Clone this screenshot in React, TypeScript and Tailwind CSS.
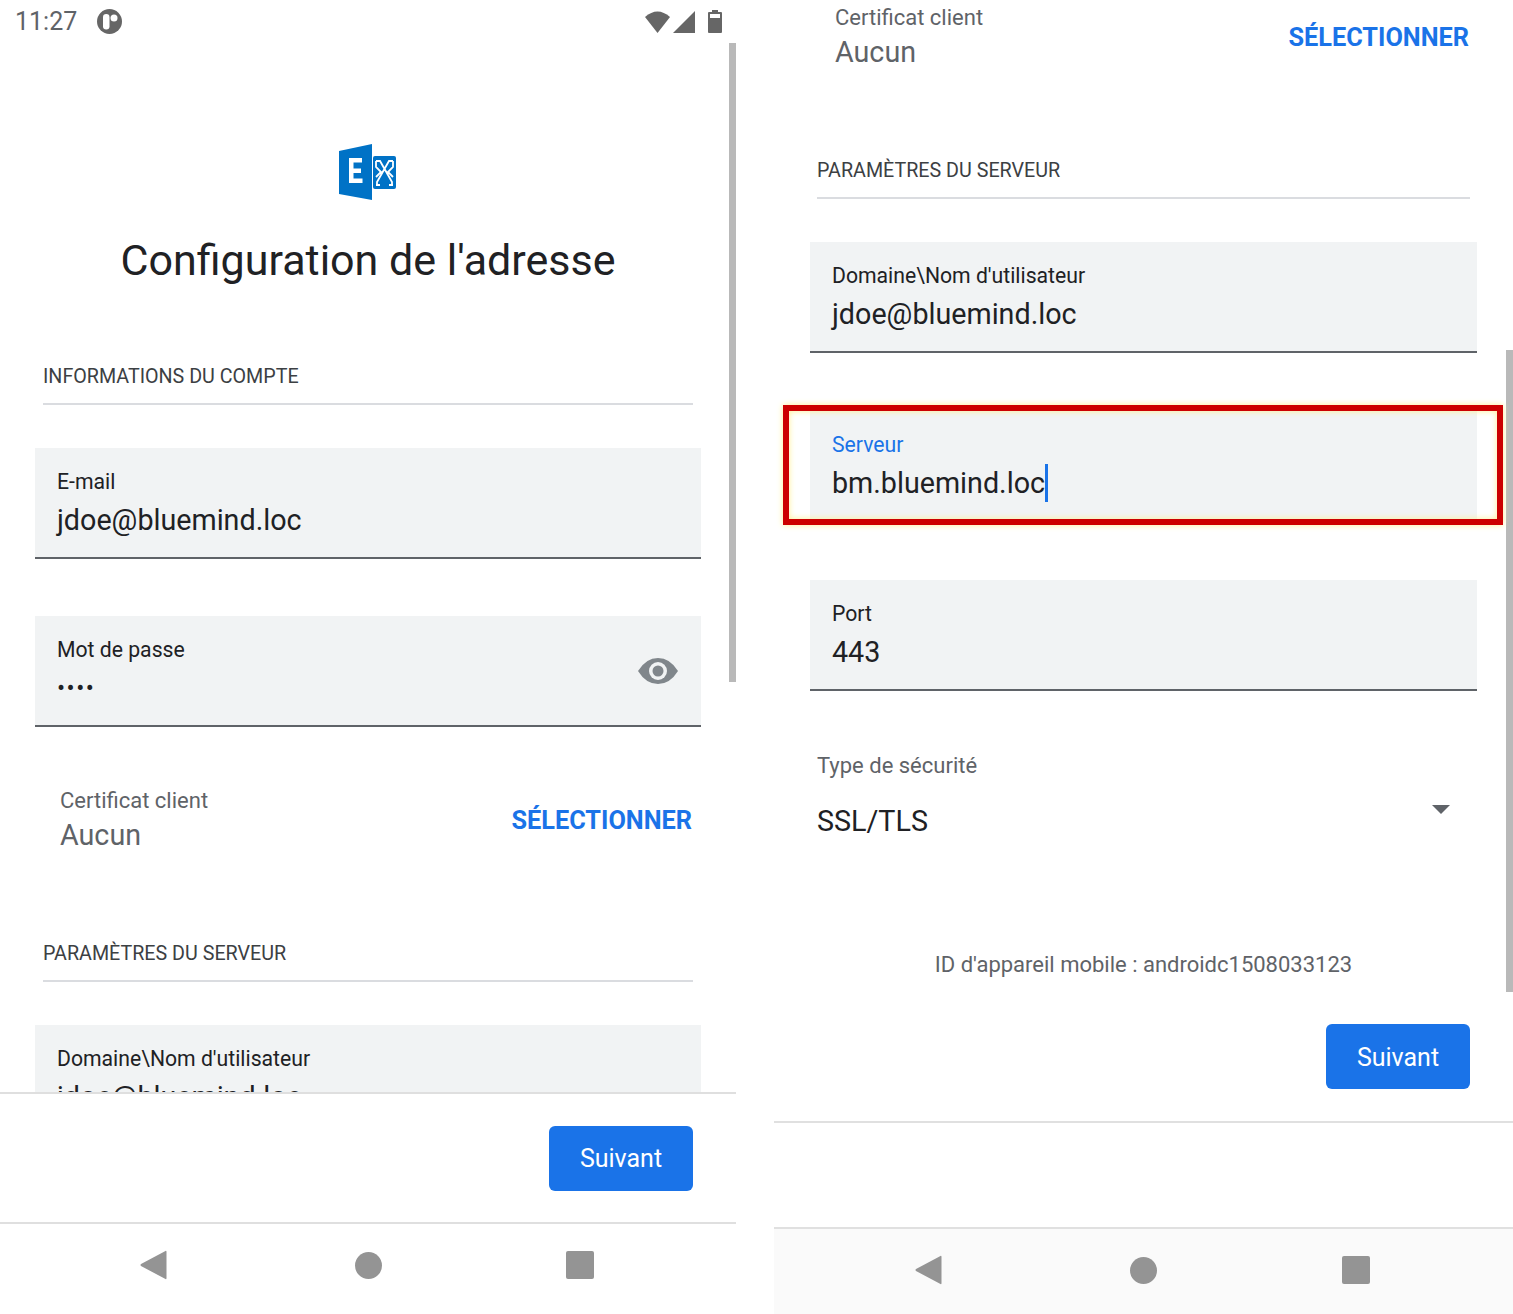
import React from 'react';

const font = { fontFamily: 'Roboto, sans-serif' };

function SectionTitle({ children, className }: { children: React.ReactNode; className?: string }) {
    return (
        <div className={`mx-[43px] h-[41px] shrink-0 border-b-2 border-[#dadce0] pt-[1px] text-[19.7px] leading-[24px] text-[#3c4043] ${className ?? ''}`}>
            {children}
        </div>
    );
}

function Field({ label, value, focused, trailing, className }: { label: string; value: React.ReactNode; focused?: boolean; trailing?: React.ReactNode; className?: string }) {
    return (
        <div className={`relative h-[111px] shrink-0 border-b-2 border-[#5f6368] bg-[#f1f3f4] px-[22px] pt-[21px] ${className ?? ''}`}>
            <div className={`text-[21.2px] leading-[26px] ${focused ? 'text-[#1a73e8]' : 'text-[#202124]'}`}>{label}</div>
            <div className="mt-[6px] flex h-[38px] items-center text-[28.7px] leading-[38px] text-[#202124]">{value}</div>
            {trailing}
        </div>
    );
}

function CertRow({ className }: { className?: string }) {
    return (
        <div className={`flex shrink-0 items-center justify-between ${className ?? ''}`}>
            <div className="pt-[1px]">
                <div className="text-[22px] leading-[26px] text-[#5f6368]">Certificat client</div>
                <div className="mt-[3px] text-[28.7px] leading-[36px] text-[#5f6368]">Aucun</div>
            </div>
            <div className="pt-[2px] text-[25.3px] leading-[30px] font-bold text-[#1a73e8]">SÉLECTIONNER</div>
        </div>
    );
}

function NextButton() {
    return (
        <button className="flex h-[65px] w-[144px] items-center justify-center rounded-[6px] bg-[#1a73e8] pt-[2px] text-[25px] text-white">Suivant</button>
    );
}

function NavBar({ className, circleClass, squareClass }: { className?: string; circleClass: string; squareClass: string }) {
    return (
        <div className={`flex items-center ${className ?? ''}`}>
            <svg width="27" height="30" viewBox="0 0 27 30"><path d="M25 1.2 Q26.5 0 26.5 2 L26.5 28 Q26.5 30 25 28.8 L1 16 Q0 15 1 14 Z" fill="#949494" /></svg>
            <div className={`h-[27px] w-[27px] rounded-full bg-[#949494] ${circleClass}`} />
            <div className={`h-[28px] w-[28px] rounded-[2px] bg-[#949494] ${squareClass}`} />
        </div>
    );
}

function ExchangeLogo() {
    return (
        <svg width="58" height="56" viewBox="0 0 58 56">
            <path d="M0 7 L33 0 V56 L0 50 Z" fill="#0072c6" />
            <path d="M10 14 H23 V18.5 H14.5 V24.5 H22 V29 H14.5 V34.5 H23.5 V39 H10 Z" fill="#fff" />
            <rect x="34" y="12" width="23" height="33" rx="2" fill="#0072c6" />
            <path d="M37 17 H41 L53 38 V41 M54 17 H50 L38 38 V41 M41 41 H37 M50 41 H54 M37 17 V23 L42 28 L37 33 M54 17 V23 L49 28 L54 33" stroke="#fff" strokeWidth="1.8" fill="none" />
        </svg>
    );
}

export default function App() {
    return (
        <div className="flex h-[1314px] w-[1513px] overflow-hidden bg-white" style={font}>
            {/* Left phone */}
            <div className="relative flex w-[736px] shrink-0 flex-col">
                <div className="flex h-[43px] shrink-0 items-center justify-between pr-[14px] pl-[15px]">
                    <div className="flex items-center gap-[20px]">
                        <span className="text-[25px] leading-none text-[#5f6368]">11:27</span>
                        <svg width="25" height="25" viewBox="0 0 25 25">
                            <circle cx="12.5" cy="12.5" r="12.5" fill="#666" />
                            <rect x="6" y="5" width="6.5" height="15.5" rx="3.2" fill="#fff" />
                            <circle cx="17" cy="9" r="3.5" fill="#fff" />
                        </svg>
                    </div>
                    <div className="flex items-center gap-[3px]">
                        <svg width="25" height="23" viewBox="0 0 25 23"><path d="M0 7 Q12.5 -4 25 7 L12.5 23 Z" fill="#666" /></svg>
                        <svg width="22" height="22" viewBox="0 0 22 22"><path d="M0 22 L22 0 V22 Z" fill="#666" /></svg>
                        <svg className="ml-[10px]" width="14" height="23" viewBox="0 0 14 23">
                            <path d="M4 0 H10 V2 H13 Q14 2 14 3 V22 Q14 23 13 23 H1 Q0 23 0 22 V3 Q0 2 1 2 H4 Z" fill="#666" />
                            <rect x="2" y="4" width="10" height="4" fill="#fff" />
                        </svg>
                    </div>
                </div>

                <div className="flex h-[1049px] shrink-0 flex-col overflow-hidden">
                    <div className="mt-[101px] flex shrink-0 justify-center"><ExchangeLogo /></div>
                    <h1 className="mt-[34px] shrink-0 text-center text-[43px] leading-[52px] font-normal text-[#202124]">Configuration de l'adresse</h1>
                    <SectionTitle className="mt-[78px]">INFORMATIONS DU COMPTE</SectionTitle>
                    <Field className="mx-[35px] mt-[43px]" label="E-mail" value="jdoe@bluemind.loc" />
                    <Field
                        className="mx-[35px] mt-[57px]"
                        label="Mot de passe"
                        value={<span className="text-[24px] tracking-[1.5px]">••••</span>}
                        trailing={
                            <svg className="absolute top-[41px] right-[23px]" width="40" height="28" viewBox="0 0 40 28">
                                <path d="M0 14 Q8 1 20 1 Q32 1 40 14 Q32 27 20 27 Q8 27 0 14 Z" fill="#80868b" />
                                <circle cx="20" cy="14" r="9" fill="#f1f3f4" />
                                <circle cx="20" cy="14" r="5.5" fill="#80868b" />
                            </svg>
                        }
                    />
                    <CertRow className="mt-[60px] mr-[44px] ml-[60px]" />
                    <SectionTitle className="mt-[88px]">PARAMÈTRES DU SERVEUR</SectionTitle>
                    <Field className="mx-[35px] mt-[43px]" label="Domaine\Nom d'utilisateur" value="jdoe@bluemind.loc" />
                </div>

                <div className="flex h-[132px] shrink-0 items-center justify-end border-y-2 border-[#dfdfdf] pr-[43px]">
                    <NextButton />
                </div>
                <div className="flex flex-1 items-start">
                    <NavBar className="mt-[26px] pl-[140px]" circleClass="ml-[188px]" squareClass="ml-[184px]" />
                </div>
                <div className="absolute top-[43px] right-0 h-[639px] w-[7px] bg-[#b9b9b9]" />
            </div>

            {/* Right phone */}
            <div className="relative ml-[38px] flex w-[739px] shrink-0 flex-col">
                <CertRow className="mt-[4px] mr-[44px] ml-[61px]" />
                <SectionTitle className="mt-[88px]">PARAMÈTRES DU SERVEUR</SectionTitle>
                <Field className="mx-[36px] mt-[43px]" label="Domaine\Nom d'utilisateur" value="jdoe@bluemind.loc" />
                <Field
                    className="mx-[36px] mt-[58px]"
                    focused
                    label="Serveur"
                    value={<span className="flex items-center">bm.bluemind.loc<span className="h-[38px] w-[3px] bg-[#1a73e8]" /></span>}
                />
                <Field className="mx-[36px] mt-[58px]" label="Port" value="443" />
                <div className="mx-[43px] mt-[62px] text-[22px] leading-[26px] text-[#5f6368]">Type de sécurité</div>
                <div className="mx-[43px] mt-[23px] flex items-start justify-between">
                    <span className="text-[28.7px] leading-[38px] text-[#202124]">SSL/TLS</span>
                    <svg className="mt-[3px] mr-[20px]" width="18" height="9" viewBox="0 0 18 9"><path d="M0 0 H18 L9 9 Z" fill="#5f6368" /></svg>
                </div>
                <div className="mt-[112px] text-center text-[22px] leading-[26px] text-[#5f6368]">ID d'appareil mobile : androidc1508033123</div>
                <div className="mt-[46px] flex justify-end pr-[43px]"><NextButton /></div>
                <div className="mt-[32px] h-[108px] shrink-0 border-y-2 border-[#e0e0e0]" />
                <div className="flex flex-1 items-start bg-[#fafafa]">
                    <NavBar className="mt-[26px] pl-[141px]" circleClass="ml-[188px]" squareClass="ml-[185px]" />
                </div>
                <div className="absolute top-[350px] right-0 h-[642px] w-[7px] bg-[#b9b9b9]" />
                {/* highlight drawn over the screenshot */}
                <div className="absolute top-[405px] left-[9px] h-[120px] w-[720px] border-[6px] border-[#cc0000] shadow-[0_0_6px_#ffef90,inset_0_0_6px_#ffef90]" />
            </div>
        </div>
    );
}
